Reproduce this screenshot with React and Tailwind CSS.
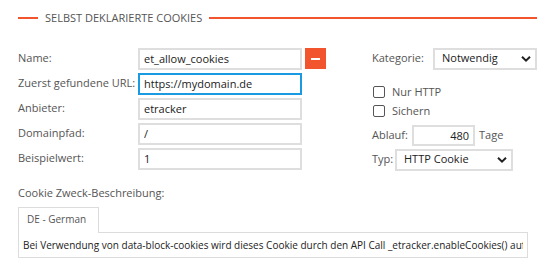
import React from 'react';

const Chevron = () => (
  <svg className="pointer-events-none absolute right-[6px] top-1/2 -translate-y-1/2" width="10" height="7" viewBox="0 0 10 7">
    <path d="M1 1.2 L5 5.2 L9 1.2" fill="none" stroke="#222" strokeWidth="2" />
  </svg>
);

const TextField = ({ value, focused }) => (
  <input
    readOnly
    value={value}
    className={`h-[22px] w-[164px] border-2 px-[4px] text-[11px] text-[#222] outline-none ${
      focused ? 'border-[#1a9ae0]' : 'border-[#dedede]'
    }`}
  />
);

const Select = ({ value, width }) => (
  <div className="relative" style={{ width }}>
    <div className="flex h-[22px] items-center border-2 border-[#dedede] px-[7px] text-[11px] text-[#222]">
      {value}
    </div>
    <Chevron />
  </div>
);

const Checkbox = ({ label }) => (
  <label className="flex items-center gap-[7px] whitespace-nowrap text-[11px] text-[#555]">
    <span className="h-[12px] w-[12px] rounded-[2px] border border-[#555] bg-white" />
    {label}
  </label>
);

export default function App() {
  const fields = [
    { label: 'Name:', value: 'et_allow_cookies' },
    { label: 'Zuerst gefundene URL:', value: 'https://mydomain.de', focused: true },
    { label: 'Anbieter:', value: 'etracker' },
    { label: 'Domainpfad:', value: '/' },
    { label: 'Beispielwert:', value: '1' },
  ];

  return (
    <div className="h-[271px] w-[550px] overflow-hidden bg-white pl-[18px] pr-[13px] pt-[10px] font-['Open_Sans',sans-serif] text-[#555]">
      {/* Section header */}
      <div className="flex items-center">
        <div className="h-[2px] w-[20px] bg-[#f2542d]" />
        <span className="whitespace-nowrap px-[7px] text-[11px] uppercase text-[#555]">Selbst deklarierte Cookies</span>
        <div className="h-[2px] flex-1 bg-[#f2542d]" />
      </div>

      <div className="mt-[21px] flex">
        {/* Left column */}
        <div className="flex flex-col gap-[3px]">
          {fields.map((f, i) => (
            <div key={f.label} className="flex items-center">
              <span className="w-[120px] whitespace-nowrap text-[11px] text-[#555]">{f.label}</span>
              <TextField value={f.value} focused={f.focused} />
              {i === 0 && (
                <button className="ml-[3px] flex h-[21px] w-[21px] items-center justify-center bg-[#f2542d]">
                  <span className="h-[2px] w-[9px] bg-white" />
                </button>
              )}
            </div>
          ))}
        </div>

        {/* Right column */}
        <div className="ml-[46px] flex flex-1 flex-col">
          <div className="flex items-center">
            <span className="w-[61px] whitespace-nowrap text-[11px]">Kategorie:</span>
            <Select value="Notwendig" width={104} />
          </div>
          <div className="mt-[14px] pl-[1px]">
            <Checkbox label="Nur HTTP" />
          </div>
          <div className="mt-[3px] pl-[1px]">
            <Checkbox label="Sichern" />
          </div>
          <div className="mt-[5px] flex items-center">
            <span className="w-[40px] whitespace-nowrap text-[11px]">Ablauf:</span>
            <input
              readOnly
              value="480"
              className="h-[21px] w-[63px] border-2 border-[#dedede] px-[4px] text-right text-[11px] text-[#222] outline-none"
            />
            <span className="ml-[4px] text-[11px]">Tage</span>
          </div>
          <div className="mt-[3px] flex items-center">
            <span className="w-[23px] whitespace-nowrap text-[11px]">Typ:</span>
            <Select value="HTTP Cookie" width={118} />
          </div>
        </div>
      </div>

      {/* Description */}
      <div className="mt-[14px] text-[11px] text-[#555]">Cookie Zweck-Beschreibung:</div>
      <div className="mt-[6px] w-[510px]">
        <div className="relative z-10 -mb-px w-[81px] whitespace-nowrap border border-b-0 border-[#dcdcdc] bg-white px-[8px] pb-[6px] pt-[4px] text-[10px] text-[#555]">
          DE - German
        </div>
        <input
          readOnly
          value="Bei Verwendung von data-block-cookies wird dieses Cookie durch den API Call _etracker.enableCookies() auf 'true' gesetzt."
          className="block h-[26px] w-full border border-[#dcdcdc] px-[4px] text-[10px] text-[#222] outline-none"
        />
      </div>
    </div>
  );
}
